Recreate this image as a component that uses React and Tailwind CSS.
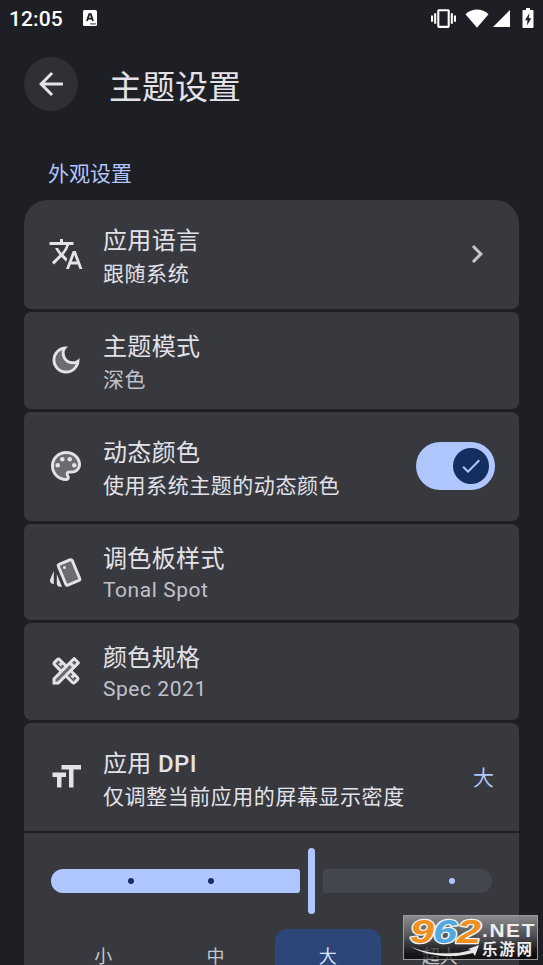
import React from "react";
import {
  MdArrowBack,
  MdCheck,
  MdChevronRight,
  MdFormatSize,
  MdOutlineDarkMode,
  MdOutlineDesignServices,
  MdOutlinePalette,
  MdOutlineStyle,
  MdTranslate,
  MdVibration,
} from "react-icons/md";

/* --------- Two tone fills, drawn behind the outlined icons --------- */
const TINTS = {
  moon: "M9.37 5.51C9.19 6.15 9.1 6.82 9.1 7.5c0 4.08 3.32 7.4 7.4 7.4.68 0 1.35-.09 1.99-.27C17.45 17.19 14.93 19 12 19c-3.86 0-7-3.14-7-7 0-2.93 1.81-5.45 4.37-6.49z",
  palette:
    "M12 4c-4.41 0-8 3.59-8 8s3.59 8 8 8c.28 0 .5-.22.5-.5 0-.16-.08-.28-.14-.35-.41-.46-.63-1.05-.63-1.65 0-1.38 1.12-2.5 2.5-2.5H16c2.21 0 4-1.79 4-4 0-3.86-3.59-7-8-7z",
  cards: "M15.22 4.75 7.87 7.79l4.96 11.96 7.35-3.05z",
  tools: "M4.6 18 17 5.6 18.4 7 6 19.4zM6.4 5 19 17.6 17.6 19 5 6.4z",
};

/* --------- Status bar --------- */
function StatusBar() {
  return (
    <div className="flex h-9 items-center justify-between pl-[9px] pr-[9px] text-white">
      <div className="flex items-center gap-5">
        <span className="pt-px text-[21px] leading-9 font-medium tracking-[0.1px]">12:05</span>
        <svg viewBox="0 0 14 16" className="h-4 w-[14px]">
          <rect width="14" height="16" rx="1.5" fill="#fff" />
          <path d="M4 11 6.2 4.2h1.6L10 11M4.9 8.6h4.2" fill="none" stroke="#1e1f24" strokeWidth="1.8" />
          <path d="M7.5 13.9h5.5" stroke="#1e1f24" strokeWidth="1.2" strokeDasharray="1.4 .5" />
        </svg>
      </div>
      <div className="flex items-center">
        <MdVibration size={25} />
        <svg viewBox="0 0 24 19" className="ml-[9px] h-[19px] w-6">
          <path d="M.5 5.2C3.8 2 7.8.5 12 .5s8.2 1.5 11.5 4.7L12 18.8z" fill="#fff" />
        </svg>
        <svg viewBox="0 0 17 17" className="ml-1 h-[17px] w-[17px]">
          <path d="M17 0v17H0z" fill="#fff" />
        </svg>
        <svg viewBox="0 0 12 20" className="ml-3 h-5 w-3">
          <path d="M4 0h4v2h2.500q1 0 1 1v16q0 1-1 1h-9q-1 0-1-1V3q0-1 1-1H4z" fill="#fff" />
          <path d="M7.500 5 3 12.300h2.500L5 17.500l4.300-7.200H6.800z" fill="#1e1f24" />
        </svg>
      </div>
    </div>
  );
}

/* --------- Settings row --------- */
function Row({ icon: Icon, tint, title, desc, muted, tight, className, children }) {
  return (
    <div className={`flex shrink-0 items-center bg-[#38393e] pl-6 pr-6 ${className}`}>
      <div className="relative -mt-px shrink-0 text-[#e3e2e9]">
        {tint && (
          <svg viewBox="0 0 24 24" className="absolute inset-0 h-9 w-9">
            <path d={TINTS[tint]} fill="currentColor" opacity=".3" />
          </svg>
        )}
        <Icon size={36} className="relative" />
      </div>
      <div className={`ml-[19px] flex-1 ${tight ? "" : "pt-[3px]"}`}>
        <div className="h-9 text-[24px] leading-9 tracking-[0.35px] text-[#e3e2e9]">{title}</div>
        <div
          className={`text-[21px] tracking-[0.55px] ${tight ? "h-[27px] leading-[27px]" : "h-[30px] leading-[30px]"} ${
            muted ? "text-[#c0c1cb]" : "text-[#e3e2e9]"
          }`}
        >
          {desc}
        </div>
      </div>
      {children}
    </div>
  );
}

/* --------- DPI slider --------- */
function DpiSlider() {
  return (
    <div className="flex h-[66px] items-center">
      <div className="flex h-6 w-[249px] items-center rounded-l-[12px] rounded-r-[3px] bg-[#b0c6ff] pl-[77px]">
        <span className="h-1.5 w-1.5 rounded-full bg-[#142e60]" />
        <span className="ml-[74px] h-1.5 w-1.5 rounded-full bg-[#142e60]" />
      </div>
      <div className="ml-2 h-[66px] w-[7px] rounded-full bg-[#b0c6ff]" />
      <div className="ml-2 flex h-6 w-[169px] items-center justify-end rounded-l-[3px] rounded-r-[12px] bg-[#44464f] pr-[37px]">
        <span className="h-1.5 w-1.5 rounded-full bg-[#b0c6ff]" />
      </div>
    </div>
  );
}

/* --------- Site badge over the bottom corner --------- */
function SiteBadge() {
  return (
    <div className="absolute top-[915px] left-[403px] h-[45px] w-[135px] border border-[#9a9a9c] bg-linear-to-b from-[#a8a8aa]/75 via-[#606062]/65 to-black/65">
      <svg viewBox="0 0 135 45" className="absolute -top-px -left-px h-[45px] w-[135px]">
        <g
          fontFamily="'Liberation Sans', sans-serif"
          fontWeight="700"
          fontStyle="italic"
          fontSize="34"
          strokeWidth="2.6"
          paintOrder="stroke"
          strokeLinejoin="round"
          stroke="#f3f3f3"
        >
          <text x="7" y="28" textLength="24" lengthAdjust="spacingAndGlyphs" fill="#f0901e">9</text>
          <text x="30" y="28" textLength="24" lengthAdjust="spacingAndGlyphs" fill="#52a9df">6</text>
          <text x="54" y="28" textLength="24" lengthAdjust="spacingAndGlyphs" fill="#f0901e">2</text>
        </g>
        <path d="M7 31c15 8 42 10 61 4l-3-1 11-4-4 11-2-3c-20 6-49 3-63-7z" fill="#e8e8e8" />
        <text
          x="79"
          y="22"
          fontFamily="'Liberation Sans', sans-serif"
          fontWeight="700"
          fontSize="19"
          letterSpacing="1.5"
          textLength="54"
          lengthAdjust="spacingAndGlyphs"
          fill="#eee"
        >
          .NET
        </text>
        <text x="79" y="40" fontFamily="'Noto Sans CJK SC', sans-serif" fontWeight="700" fontSize="15.5" textLength="50" fill="#eee">
          乐游网
        </text>
      </svg>
    </div>
  );
}

const SIZES = ["小", "中", "大", "超大"];

export default function App() {
  return (
    <div
      lang="zh-CN"
      className="relative flex h-[965px] w-[543px] flex-col overflow-hidden bg-[#1e1f24] font-[Roboto,'Noto_Sans_CJK_SC',sans-serif]"
    >
      <StatusBar />

      {/* HEADER */}
      <header className="mt-[21px] flex h-[54px] shrink-0 items-center pl-6">
        <button className="grid h-[54px] w-[54px] place-items-center rounded-full bg-[#2f3035] text-[#e3e2e9]">
          <MdArrowBack size={36} />
        </button>
        <h1 className="ml-[31px] pt-[7px] text-[33px] leading-[54px] text-[#e3e2e9]">主题设置</h1>
      </header>

      <h2 className="mt-12 ml-12 h-[30px] shrink-0 text-[21px] leading-[30px] text-[#b0c6ff]">外观设置</h2>

      {/* SETTINGS */}
      <main className="mx-6 mt-[11px] flex flex-col gap-[3px]">
        <Row icon={MdTranslate} title="应用语言" desc="跟随系统" className="h-[109px] rounded-t-[24px] rounded-b-[7px]">
          <MdChevronRight size={36} className="-mt-px text-[#c5c6d0]" />
        </Row>
        <Row icon={MdOutlineDarkMode} tint="moon" title="主题模式" desc="深色" muted className="h-[97px] rounded-[7px]" />
        <Row
          icon={MdOutlinePalette}
          tint="palette"
          title="动态颜色"
          desc="使用系统主题的动态颜色"
          className="h-[109px] rounded-[7px]"
        >
          <div className="-mt-px flex h-12 w-[79px] items-center justify-end rounded-full bg-[#b0c6ff] pr-1.5">
            <div className="grid h-9 w-9 place-items-center rounded-full bg-[#142e60] text-[#b0c6ff]">
              <MdCheck size={24} />
            </div>
          </div>
        </Row>
        <Row icon={MdOutlineStyle} tint="cards" title="调色板样式" desc="Tonal Spot" muted tight className="h-[96px] rounded-[7px]" />
        <Row
          icon={MdOutlineDesignServices}
          tint="tools"
          title="颜色规格"
          desc="Spec 2021"
          muted
          tight
          className="h-[97px] rounded-[7px]"
        />
        <Row
          icon={MdFormatSize}
          title={
            <>
              应用 <span className="font-medium">DPI</span>
            </>
          }
          desc="仅调整当前应用的屏幕显示密度"
          className="h-[108px] rounded-t-[7px]"
        >
          <span className="pt-[3px] pr-px text-[21px] text-[#b0c6ff]">大</span>
        </Row>

        <div className="-mt-px h-[140px] shrink-0 bg-[#38393e] px-[27px] pt-[15px]">
          <DpiSlider />
          <div className="-mx-[1px] mt-[15px] grid grid-cols-4 gap-[6px]">
            {SIZES.map((s) => (
              <div
                key={s}
                className={`h-14 rounded-[12px] text-center text-[18px] leading-[55px] ${
                  s === "大" ? "bg-[#2c4678] text-[#d9e2ff]" : "text-[#c5c6d0]"
                }`}
              >
                {s}
              </div>
            ))}
          </div>
        </div>
      </main>

      <SiteBadge />
    </div>
  );
}
